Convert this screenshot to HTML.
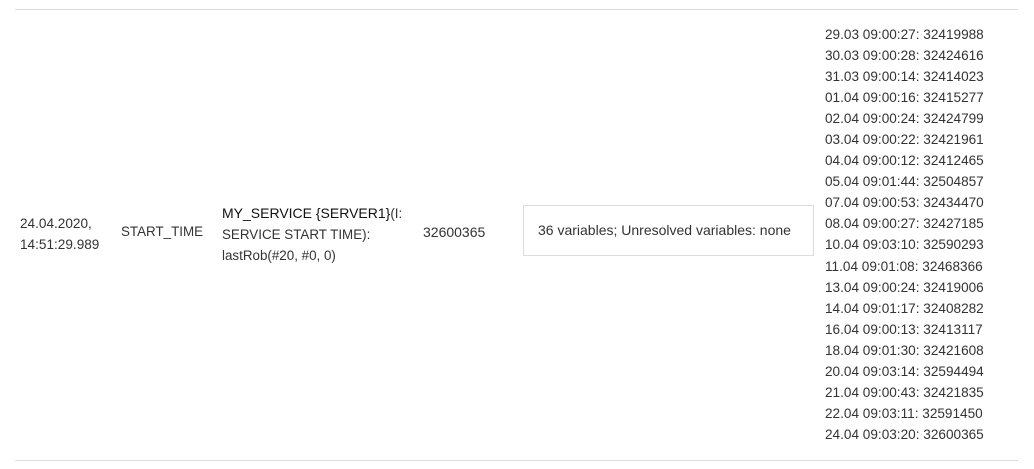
<!DOCTYPE html>
<html><head><style>
body{margin:0;width:1034px;height:469px;background:#fff;font-family:"Liberation Sans",sans-serif;font-size:13.4px;color:#333;position:relative;overflow:hidden}
.a{position:absolute;white-space:nowrap}
.hl{position:absolute;left:15px;width:1003px;height:1px;background:#ddd}
.box{position:absolute;left:523px;top:205px;width:291px;height:51px;border:1px solid #ddd;box-sizing:border-box}
.list{position:absolute;left:825px;top:24px;line-height:21.05px;font-size:13.6px}
</style></head><body>
<div class="hl" style="top:9px"></div>
<div class="hl" style="top:460px"></div>
<div class="a" style="left:20px;top:213px;line-height:21px;font-size:13.6px">24.04.2020,<br>14:51:29.989</div>
<div class="a" style="left:121px;top:224px">START_TIME</div>
<div class="a" style="left:222px;top:203px;line-height:21px"><span style="color:#111;font-size:14px">MY_SERVICE {SERVER1}</span>(I:<br>SERVICE START TIME):<br>lastRob(#20, #0, 0)</div>
<div class="a" style="left:423px;top:224px;font-size:14px">32600365</div>
<div class="box"></div>
<div class="a" style="left:538px;top:222px;font-size:14px">36 variables; Unresolved variables: none</div>
<div class="list">29.03 09:00:27: 32419988<br>30.03 09:00:28: 32424616<br>31.03 09:00:14: 32414023<br>01.04 09:00:16: 32415277<br>02.04 09:00:24: 32424799<br>03.04 09:00:22: 32421961<br>04.04 09:00:12: 32412465<br>05.04 09:01:44: 32504857<br>07.04 09:00:53: 32434470<br>08.04 09:00:27: 32427185<br>10.04 09:03:10: 32590293<br>11.04 09:01:08: 32468366<br>13.04 09:00:24: 32419006<br>14.04 09:01:17: 32408282<br>16.04 09:00:13: 32413117<br>18.04 09:01:30: 32421608<br>20.04 09:03:14: 32594494<br>21.04 09:00:43: 32421835<br>22.04 09:03:11: 32591450<br>24.04 09:03:20: 32600365</div>
</body></html>
